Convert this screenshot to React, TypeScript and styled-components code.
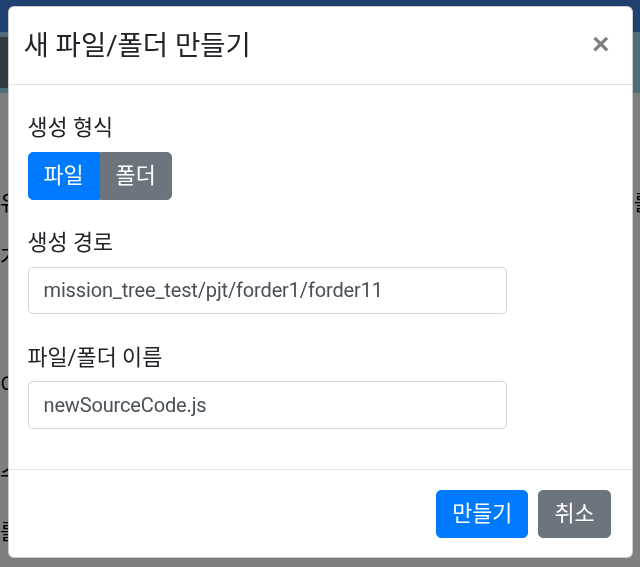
import React from "react";
import styled, { createGlobalStyle } from "styled-components";

const Global = createGlobalStyle`
  html, body { margin: 0; padding: 0; }
  body {
    width: 640px;
    height: 567px;
    overflow: hidden;
    background: #fff;
    color: #212529;
    font-family: "Segoe UI", Roboto, "Noto Sans CJK KR", sans-serif;
  }
  * { box-sizing: border-box; }
`;

/* ---------- background page ---------- */
const Page = styled.div`
  width: 640px;
  height: 567px;
  display: flex;
  flex-direction: column;
  overflow: hidden;
`;

const TopBar = styled.div`
  height: 32px;
  background: #4080e0;
`;

const SubBar = styled.div`
  height: 61px;
  background: #9adcf0;
  padding: 5px 0;
`;

const DarkBlock = styled.div`
  width: 120px;
  height: 100%;
  background: #68747f;
`;

const Content = styled.div`
  flex: 1;
  background: #fff;
  color: #000;
  font-family: "Noto Sans CJK KR", sans-serif;
  font-size: 21px;
  line-height: 30px;
`;

const Para = styled.div<{ $mt: number }>`
  margin-top: ${(p) => p.$mt}px;
  display: flex;
  justify-content: space-between;
  white-space: nowrap;
`;

const EdgeRight = styled.span`
  margin-right: -13px;
`;

/* ---------- modal ---------- */
const Backdrop = styled.div`
  position: fixed;
  inset: 0;
  background: rgba(0, 0, 0, 0.5);
`;

const ModalLayer = styled.div`
  position: fixed;
  inset: 0;
  display: flex;
  justify-content: center;
  align-items: flex-start;
  padding-top: 6px;
`;

const ModalContent = styled.div`
  width: 625px;
  background: #fff;
  border: 1px solid rgba(0, 0, 0, 0.2);
  border-radius: 6px;
  display: flex;
  flex-direction: column;
`;

const Header = styled.div`
  display: flex;
  align-items: flex-start;
  padding: 20px 20px 19px 15px;
  border-bottom: 1px solid #dee2e6;
`;

const Title = styled.h5`
  margin: 0;
  font-size: 27.5px;
  font-weight: 400;
  line-height: 37.5px;
  color: #212529;
`;

const Close = styled.button`
  margin: -20px -20px -20px auto;
  padding: 22px 22px 18px 20px;
  background: transparent;
  border: 0;
  font-family: "Liberation Sans", Arial, sans-serif;
  font-size: 30px;
  font-weight: 700;
  line-height: 1;
  color: #000;
  opacity: 0.5;
  cursor: pointer;
`;

const Body = styled.div`
  padding: 20px 20px 20px 19px;
  display: flex;
  flex-direction: column;
`;

const Group = styled.div`
  display: flex;
  flex-direction: column;
  align-items: flex-start;
  margin-bottom: 20px;
`;

const Label = styled.label`
  padding: 8.5px 0;
  font-size: 21.8px;
  line-height: 30px;
  color: #212529;
`;

const BtnGroup = styled.div`
  display: inline-flex;
`;

const Btn = styled.button<{ $variant: "primary" | "secondary"; $pos?: "first" | "last" | "single" }>`
  font-family: inherit;
  font-size: 21.8px;
  line-height: 30px;
  height: 48px;
  padding: 0 15px;
  color: #fff;
  border: 1px solid ${(p) => (p.$variant === "primary" ? "#007bff" : "#6c757d")};
  background: ${(p) => (p.$variant === "primary" ? "#007bff" : "#6c757d")};
  border-radius: ${(p) =>
    p.$pos === "first" ? "5px 0 0 5px" : p.$pos === "last" ? "0 5px 5px 0" : "5px"};
  cursor: pointer;
`;

const Input = styled.input`
  width: 479px;
  height: 47.5px;
  padding: 7.5px 15px;
  font-family: inherit;
  font-size: 20px;
  letter-spacing: -0.15px;
  line-height: 30px;
  color: #495057;
  background: #fff;
  border: 1px solid #ced4da;
  border-radius: 5px;
  outline: none;
`;

const Footer = styled.div`
  display: flex;
  justify-content: flex-end;
  gap: 10px;
  padding: 20px 21px 19px 20px;
  border-top: 1px solid #dee2e6;
`;

export default function App() {
  return (
    <>
      <Global />
      <Page>
        <TopBar />
        <SubBar>
          <DarkBlock />
        </SubBar>
        <Content>
          <Para $mt={93}>
            <span>유</span>
            <EdgeRight>를</EdgeRight>
          </Para>
          <Para $mt={24}>
            <span>가</span>
          </Para>
          <Para $mt={98}>
            <span>이</span>
          </Para>
          <Para $mt={59}>
            <span>수</span>
          </Para>
          <Para $mt={28}>
            <span>를</span>
          </Para>
        </Content>
      </Page>
      <Backdrop />
      <ModalLayer>
        <ModalContent>
          <Header>
            <Title>새 파일/폴더 만들기</Title>
            <Close aria-label="Close">×</Close>
          </Header>
          <Body>
            <Group>
              <Label>생성 형식</Label>
              <BtnGroup>
                <Btn $variant="primary" $pos="first">파일</Btn>
                <Btn $variant="secondary" $pos="last">폴더</Btn>
              </BtnGroup>
            </Group>
            <Group>
              <Label>생성 경로</Label>
              <Input readOnly value="mission_tree_test/pjt/forder1/forder11" />
            </Group>
            <Group>
              <Label>파일/폴더 이름</Label>
              <Input readOnly value="newSourceCode.js" />
            </Group>
          </Body>
          <Footer>
            <Btn $variant="primary">만들기</Btn>
            <Btn $variant="secondary">취소</Btn>
          </Footer>
        </ModalContent>
      </ModalLayer>
    </>
  );
}
